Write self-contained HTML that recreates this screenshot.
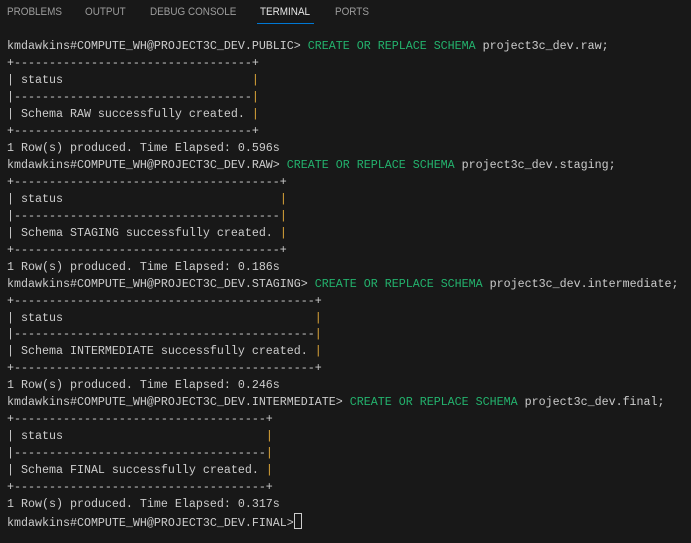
<!DOCTYPE html>
<html><head><style>
body{margin:0;width:691px;height:543px;background:#181818;overflow:hidden;position:relative;font-family:"Liberation Sans",sans-serif}
.tab{position:absolute;top:6px;font-size:11px;color:#9d9d9d;transform:scaleX(0.9);transform-origin:left top}
.act{color:#e7e7e7}
.ul{position:absolute;left:257px;top:23px;width:57px;height:1px;background:#0078d4}
pre{position:absolute;left:7px;top:38px;margin:0;font-family:"Liberation Mono",monospace;font-size:11.67px;line-height:16.97px;color:#cccccc}
.g{color:#23b26d}.o{color:#e0a83a}
.cur{display:inline-block;width:6px;height:14px;border:1px solid #cccccc;vertical-align:-3px}
</style></head><body>
<div class="tab" style="left:7px">PROBLEMS</div>
<div class="tab" style="left:85px">OUTPUT</div>
<div class="tab" style="left:150px">DEBUG CONSOLE</div>
<div class="tab act" style="left:260px">TERMINAL</div>
<div class="tab" style="left:335px">PORTS</div>
<div class="ul"></div>
<pre>kmdawkins#COMPUTE_WH@PROJECT3C_DEV.PUBLIC&gt; <span class="g">CREATE OR REPLACE SCHEMA</span> project3c_dev.raw;
+----------------------------------+
| status                           <span class="o">|</span>
|----------------------------------<span class="o">|</span>
| Schema RAW successfully created. <span class="o">|</span>
+----------------------------------+
1 Row(s) produced. Time Elapsed: 0.596s
kmdawkins#COMPUTE_WH@PROJECT3C_DEV.RAW&gt; <span class="g">CREATE OR REPLACE SCHEMA</span> project3c_dev.staging;
+--------------------------------------+
| status                               <span class="o">|</span>
|--------------------------------------<span class="o">|</span>
| Schema STAGING successfully created. <span class="o">|</span>
+--------------------------------------+
1 Row(s) produced. Time Elapsed: 0.186s
kmdawkins#COMPUTE_WH@PROJECT3C_DEV.STAGING&gt; <span class="g">CREATE OR REPLACE SCHEMA</span> project3c_dev.intermediate;
+-------------------------------------------+
| status                                    <span class="o">|</span>
|-------------------------------------------<span class="o">|</span>
| Schema INTERMEDIATE successfully created. <span class="o">|</span>
+-------------------------------------------+
1 Row(s) produced. Time Elapsed: 0.246s
kmdawkins#COMPUTE_WH@PROJECT3C_DEV.INTERMEDIATE&gt; <span class="g">CREATE OR REPLACE SCHEMA</span> project3c_dev.final;
+------------------------------------+
| status                             <span class="o">|</span>
|------------------------------------<span class="o">|</span>
| Schema FINAL successfully created. <span class="o">|</span>
+------------------------------------+
1 Row(s) produced. Time Elapsed: 0.317s
kmdawkins#COMPUTE_WH@PROJECT3C_DEV.FINAL&gt;<span class="cur"></span></pre>
</body></html>
